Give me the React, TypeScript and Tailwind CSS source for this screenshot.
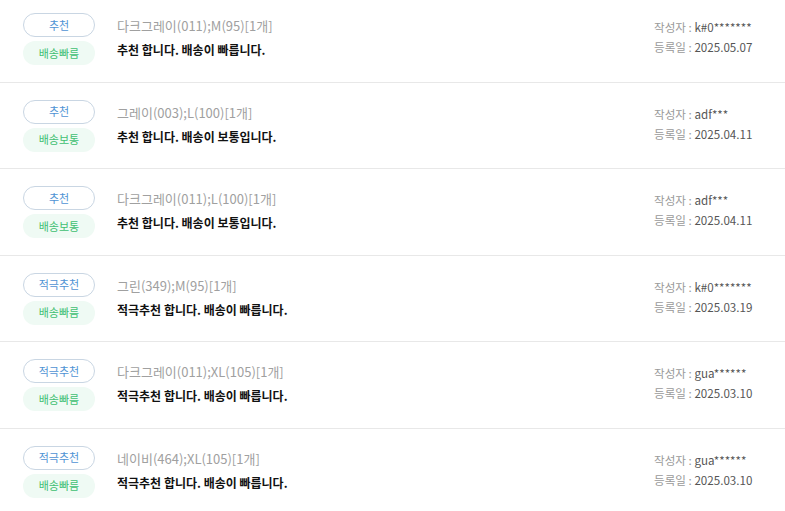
const font = { fontFamily: '"Noto Sans CJK KR", "Noto Sans", sans-serif' }

interface Review {
  grade: string
  delivery: string
  option: string
  message: string
  writer: string
  date: string
}

const reviews: Review[] = [
  { grade: "추천", delivery: "배송빠름", option: "다크그레이(011);M(95)[1개]", message: "추천 합니다. 배송이 빠릅니다.", writer: "k#0*******", date: "2025.05.07" },
  { grade: "추천", delivery: "배송보통", option: "그레이(003);L(100)[1개]", message: "추천 합니다. 배송이 보통입니다.", writer: "adf***", date: "2025.04.11" },
  { grade: "추천", delivery: "배송보통", option: "다크그레이(011);L(100)[1개]", message: "추천 합니다. 배송이 보통입니다.", writer: "adf***", date: "2025.04.11" },
  { grade: "적극추천", delivery: "배송빠름", option: "그린(349);M(95)[1개]", message: "적극추천 합니다. 배송이 빠릅니다.", writer: "k#0*******", date: "2025.03.19" },
  { grade: "적극추천", delivery: "배송빠름", option: "다크그레이(011);XL(105)[1개]", message: "적극추천 합니다. 배송이 빠릅니다.", writer: "gua******", date: "2025.03.10" },
  { grade: "적극추천", delivery: "배송빠름", option: "네이비(464);XL(105)[1개]", message: "적극추천 합니다. 배송이 빠릅니다.", writer: "gua******", date: "2025.03.10" },
]

function ReviewRow({ r }: { r: Review }) {
  return (
    <li className="flex items-start border-b border-[#e8e8e8] pt-[17px] pb-[16.5px] first:pt-[13px] pl-[23px]">
      <div className="flex flex-col gap-1 w-[72px] shrink-0">
        <span className="h-6 flex items-center justify-center rounded-full border border-[#c9d6e3] bg-white text-[11px] text-[#4f93d4]">
          {r.grade}
        </span>
        <span className="h-6 flex items-center justify-center rounded-full bg-[#effaf4] text-[11px] text-[#3fbf72]">
          {r.delivery}
        </span>
      </div>
      <div className="flex flex-col ml-[22px] flex-1 pt-[3px]">
        <span className="text-[13px] leading-[20px] text-[#a0a0a0]">{r.option}</span>
        <span className="text-[12px] leading-[20px] mt-[4px] font-bold text-[#111]">{r.message}</span>
      </div>
      <div className="flex flex-col w-[131px] shrink-0 pt-[7px] text-[11.6px] leading-[14px]">
        <span>
          <span className="text-[#9a9a9a]">작성자 : </span>
          <span className="text-[#555]">{r.writer}</span>
        </span>
        <span className="mt-[6px]">
          <span className="text-[#9a9a9a]">등록일 : </span>
          <span className="text-[#555]">{r.date}</span>
        </span>
      </div>
    </li>
  )
}

export default function App() {
  return (
    <div className="w-[785px] h-[511px] bg-white overflow-hidden" style={font}>
      <ul className="flex flex-col">
        {reviews.map((r, i) => (
          <ReviewRow key={i} r={r} />
        ))}
      </ul>
    </div>
  )
}
